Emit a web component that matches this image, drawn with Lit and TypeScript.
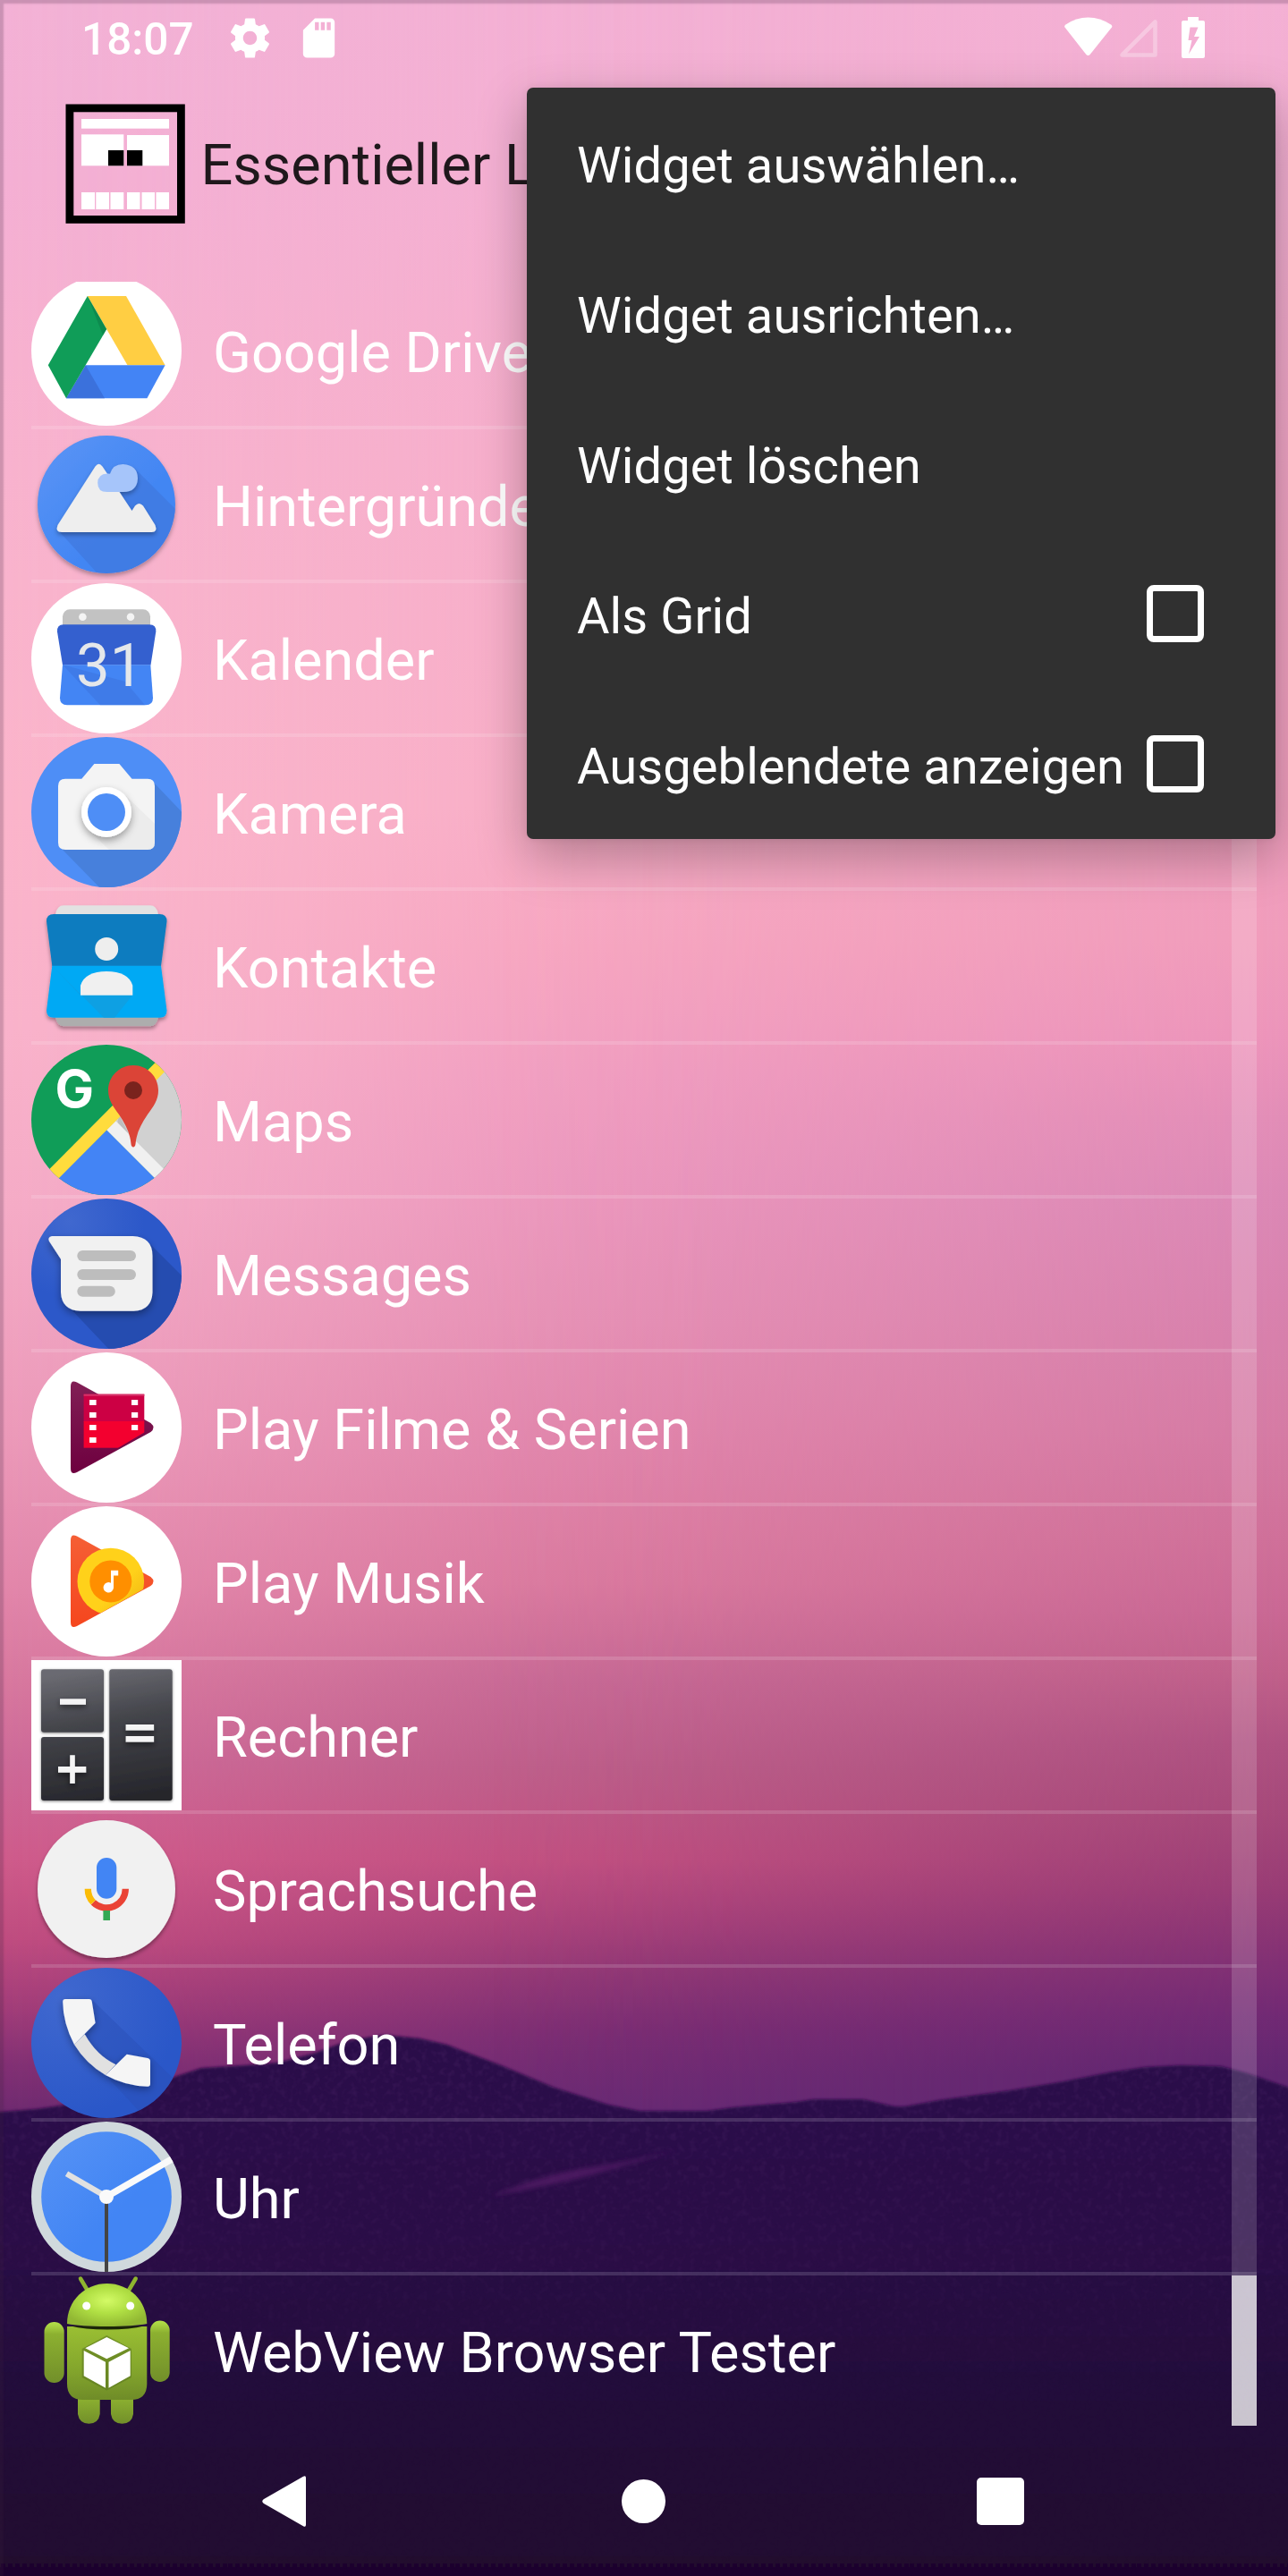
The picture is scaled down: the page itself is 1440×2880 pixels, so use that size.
import { LitElement, html, svg, css } from "lit";
import { customElement } from "lit/decorators.js";

/* ---------- app icons, each drawn on a 168 x 168 grid ---------- */

const driveIcon = svg`
  <circle cx="84" cy="84" r="84" fill="#fff"/>
  <path fill="#ffce43" d="M62.8 23H106l43.6 77.3h-42.1z"/>
  <path fill="#4384f5" d="M60.8 100.3h88.8l-20.2 37H39z"/>
  <path fill="#3b71dc" d="M60.8 100.3 82 137.3H39z"/>
  <path fill="#109d58" d="M18.8 100.3 62.8 23l21.4 37L39 137.3z"/>
  <path fill="#0a6b3c" opacity=".35" d="M62.8 23l21.4 37-4 7z"/>`;

const wallpaperIcon = svg`
  <defs>
    <linearGradient id="wp" x1="0" y1="0" x2="1" y2="1"><stop offset="0" stop-color="#5b95f5"/><stop offset=".6" stop-color="#4386f3"/></linearGradient>
    <clipPath id="wpc"><circle cx="84" cy="84" r="77"/></clipPath>
    <filter id="soft" x="-20%" y="-20%" width="140%" height="140%"><feDropShadow dx="0" dy="3" stdDeviation="2.5" flood-opacity=".3"/></filter>
  </defs>
  <circle cx="84" cy="84" r="77" fill="url(#wp)" filter="url(#soft)"/>
  <g clip-path="url(#wpc)">
    <path fill="#3e72d6" opacity=".5" d="M114 42l60 60v70H84L32 115z"/>
  </g>
  <g filter="url(#soft)">
    <path fill="#eee" d="M71.500 41.500q4-5.500 8 0L112.500 91l3.500-5.500q4.500-5 9 0L138.500 107q3 8-4 8H34q-7.500 0-4.500-8z"/>
    <path fill="#a6c5fa" d="M84.500 70q-10.300 0-10.300-10T85 49.500l3 .3Q91 39 102.500 39 119 40 119 55q-1 15-16 15z"/>
  </g>`;

const calendarIcon = svg`
  <circle cx="84" cy="84" r="84" fill="#fff"/>
  <rect x="35" y="29.300" width="98" height="30" rx="8" fill="#c2c2c2"/>
  <circle cx="57.400" cy="37.700" r="4.300" fill="#f4f4f4"/>
  <circle cx="111" cy="37.700" r="4.300" fill="#f4f4f4"/>
  <path fill="#3460cf" d="M36 46.300h96q8 0 7.300 8L133.500 91.500h-98.500L29 54.300q-.500-8 7-8z"/>
  <path fill="#4385f4" d="M35 91.300h98.300l2.700 37q0 8-8 8H40q-8 0-8-8z"/>
  <path fill="#3b71dc" opacity=".5" d="M35 91.300 77 136.300h50L105 110z"/>
  <text x="50" y="115" font-family="Roboto, sans-serif" font-size="67" fill="#e4e7ea">31</text>`;

const cameraIcon = svg`
  <defs>
    <clipPath id="cmc"><circle cx="84" cy="84" r="84"/></clipPath>
    <filter id="cms" x="-30%" y="-30%" width="160%" height="160%"><feDropShadow dx="0" dy="4" stdDeviation="4" flood-opacity=".35"/></filter>
  </defs>
  <circle cx="84" cy="84" r="84" fill="#4e8ef6"/>
  <path clip-path="url(#cmc)" fill="#4780dc" d="M136 50l40 42v80H80L33 124z"/>
  <path fill="#f4f4f4" d="M38 46.700h18.300L70.400 30h28l14.100 16.700H130q8 0 8 8V118q0 8-8 8H38q-8 0-8-8V54.700q0-8 8-8z"/>
  <path fill="#e6e6e6" d="M104 64l34 33v21q0 8-8 8H87L64 104z" opacity=".6"/>
  <circle cx="84" cy="84" r="28" fill="#fff" filter="url(#cms)"/>
  <circle cx="84" cy="84" r="21" fill="#4e8ef6"/>`;

const contactsIcon = svg`
  <defs><filter id="cts" x="-20%" y="-20%" width="140%" height="140%"><feDropShadow dx="0" dy="3" stdDeviation="2" flood-opacity=".35"/></filter></defs>
  <g filter="url(#cts)">
    <path fill="#e2e2e2" d="M36 16.300h97q7 0 9 9.700H27q2-9.700 9-9.700z"/>
    <path fill="#adadad" d="M27 141h115q-2 10.300-9 10.300H36q-7 0-9-10.300z"/>
    <path fill="#0a7cbf" d="M25 26h118.500q8 0 8 8L145 84H23.300L17 34q0-8 8-8z"/>
    <path fill="#06a9f4" d="M23.300 83.700H145l6.500 50q0 8-8 8H25q-8 0-8-8z"/>
  </g>
  <path fill="#129ddf" d="M23.300 83.700 55 116.700h58L93 141.700H81z" opacity=".8"/>
  <ellipse cx="84.200" cy="65" rx="13" ry="13" fill="#eee"/>
  <path fill="#f0f0f0" d="M55 116.700v-11q5-15.700 29.200-15.700t29.100 15.700v11z"/>`;

const mapsIcon = svg`
  <defs><clipPath id="mpc"><circle cx="84" cy="84" r="84"/></clipPath></defs>
  <g clip-path="url(#mpc)">
    <rect width="168" height="168" fill="#109d58"/>
    <path fill="#d1d1d1" d="M168 10 84 95l84 84z"/>
    <path fill="#bdbdbd" d="M98 78l18 36-20-24z"/>
    <path fill="#4384f5" d="M84.200 95.300 0 179h168z"/>
    <path fill="#f0f0f0" d="M84.200 95.300 94.500 85.300 168 159l-10 10z"/>
    <path fill="#ffdc3d" d="M0 159.400 159.500-1 170 9.300 10.500 169.700z"/>
  </g>
  <text x="26.500" y="69.500" font-family="Inter, Roboto, sans-serif" font-weight="700" font-size="58" fill="#fff">G</text>
  <path fill="#db4437" d="M114 23c15.500 0 28 12.500 28 28 0 11-5.500 18-12 27-7.500 11-12.500 21-13.500 33-.300 4.500-4.700 4.500-5 0-1-12-6-22-13.500-33C91.500 69 86 62 86 51c0-15.500 12.500-28 28-28z"/>
  <circle cx="114" cy="51" r="10" fill="#7a231d"/>`;

const messagesIcon = svg`
  <defs>
    <clipPath id="msc"><circle cx="84" cy="84" r="84"/></clipPath>
    <radialGradient id="msg" cx=".25" cy=".15" r=".5"><stop offset="0" stop-color="#4068cf"/><stop offset="1" stop-color="#2c58c9"/></radialGradient>
    <filter id="mss" x="-20%" y="-20%" width="140%" height="140%"><feDropShadow dx="0" dy="4" stdDeviation="4" flood-opacity=".35"/></filter>
  </defs>
  <circle cx="84" cy="84" r="84" fill="url(#msg)"/>
  <path clip-path="url(#msc)" fill="#254cb0" d="M133 51l45 45v80H94L40 119z"/>
  <path filter="url(#mss)" fill="#f1f1f1" d="M23 42h90.500q22 1 22 22v41q-1 20-21 20.700H55q-21-.700-22-21V67.700L19.800 47.500Q18 43 23 42z"/>
  <rect x="51.300" y="58" width="65.700" height="12" rx="6" fill="#bdbdbd"/>
  <rect x="51.300" y="79" width="65.700" height="12" rx="6" fill="#bdbdbd"/>
  <rect x="51.300" y="97.700" width="42.500" height="12" rx="6" fill="#bdbdbd"/>`;

const playShape = "M44 38q0-8 7-4.500l82.500 45.500q6 5 0 10L51 134q-7 3.500-7-4.500z";

const filmIcon = svg`
  <defs>
    <linearGradient id="flg" x1="0" y1="0" x2="0" y2="1"><stop offset="0" stop-color="#811f55"/><stop offset="1" stop-color="#6e003f"/></linearGradient>
    <clipPath id="flc"><path d="M0 0h168v65L44 138z"/></clipPath>
  </defs>
  <circle cx="84" cy="84" r="84" fill="#fff"/>
  <path fill="url(#flg)" d=${playShape}/>
  <g clip-path="url(#flc)">
    <rect x="58.600" y="46.700" width="67.700" height="31" fill="#cc0044"/>
    <rect x="58.600" y="46.700" width="67.700" height="2" fill="#d8326a"/>
    <rect x="58.600" y="77" width="67.700" height="29.700" fill="#f3002f"/>
  </g>
  <g fill="#fff">
    <rect x="65" y="53" width="7.600" height="6"/><rect x="65" y="67" width="7.600" height="6"/>
    <rect x="65" y="81" width="7.600" height="6"/><rect x="65" y="95" width="7.600" height="6"/>
    <rect x="112" y="53" width="7.200" height="6"/><rect x="112" y="67" width="7.200" height="6"/>
    <rect x="112" y="81" width="7.200" height="6"/>
  </g>`;

const musicIcon = svg`
  <defs>
    <linearGradient id="mug" x1="0" y1="0" x2="0" y2="1"><stop offset="0" stop-color="#f55f35"/><stop offset="1" stop-color="#f5461e"/></linearGradient>
    <linearGradient id="muy" x1="0" y1="0" x2="1" y2="1"><stop offset=".6" stop-color="#ffd11a"/><stop offset="1" stop-color="#eeb211"/></linearGradient>
    <clipPath id="muc"><path d="M0 0h168v69L44 138z"/></clipPath>
  </defs>
  <circle cx="84" cy="84" r="84" fill="#fff"/>
  <path fill="url(#mug)" d=${playShape}/>
  <circle clip-path="url(#muc)" cx="88.800" cy="84" r="37.300" fill="url(#muy)"/>
  <circle cx="88.800" cy="84" r="23.500" fill="#ff8f00"/>
  <path fill="#fff" d="M89 71.700h8.200v5.800H92V91a5.700 5.700 0 1 1-3-5.200z"/>`;

const calculatorIcon = svg`
  <defs>
    <linearGradient id="ck" gradientUnits="userSpaceOnUse" x1="60" y1="10" x2="84" y2="157"><stop offset="0" stop-color="#6b6b72"/><stop offset=".4" stop-color="#44454b"/><stop offset="1" stop-color="#27272c"/></linearGradient>
    <filter id="cks" x="-10%" y="-10%" width="120%" height="120%"><feDropShadow dx="0" dy="1" stdDeviation="1.500" flood-opacity=".5"/></filter>
    <filter id="ckg" x="-50%" y="-50%" width="200%" height="200%"><feDropShadow dx="0" dy="3" stdDeviation="3" flood-opacity=".5"/></filter>
  </defs>
  <rect width="168" height="168" fill="#fff"/>
  <g fill="url(#ck)" filter="url(#cks)">
    <rect x="11" y="10.300" width="70" height="70.400" rx="3"/>
    <rect x="11" y="86" width="70" height="71" rx="3"/>
    <rect x="87.300" y="10.300" width="70.400" height="146.700" rx="3"/>
  </g>
  <g fill="#f4f4f4" filter="url(#ckg)">
    <rect x="32" y="43.300" width="29" height="6.500"/>
    <path d="M30 119h13.200v-12.700h5.600V119H61.300v6.700H48.800V138h-5.600v-12.300H30z"/>
    <rect x="105.600" y="72" width="31.500" height="6.600"/>
    <rect x="105.600" y="85" width="31.500" height="6.600"/>
  </g>`;

const voiceIcon = svg`
  <defs><filter id="vos" x="-20%" y="-20%" width="140%" height="140%"><feDropShadow dx="0" dy="3" stdDeviation="2" flood-opacity=".35"/></filter></defs>
  <circle cx="84" cy="84" r="77" fill="#f1f1f1" filter="url(#vos)"/>
  <rect x="73" y="49" width="22.300" height="45.700" rx="11.100" fill="#4285f4"/>
  <g fill="none" stroke-width="7.300">
    <path stroke="#ea4335" d="M105.300 83.700a21.100 21.100 0 0 1-36 15.100"/>
    <path stroke="#fbbc05" d="M63.300 83.700a21.100 21.100 0 0 0 6 15.100"/>
  </g>
  <rect x="80.400" y="108" width="7.600" height="11" fill="#34a853"/>`;

const phoneIcon = svg`
  <defs>
    <clipPath id="phc"><circle cx="84" cy="84" r="84"/></clipPath>
    <radialGradient id="phg" cx=".2" cy=".2" r=".8"><stop offset="0" stop-color="#4068cf"/><stop offset="1" stop-color="#2a57c8"/></radialGradient>
    <filter id="phs" x="-20%" y="-20%" width="140%" height="140%"><feDropShadow dx="0" dy="3" stdDeviation="4" flood-opacity=".35"/></filter>
  </defs>
  <circle cx="84" cy="84" r="84" fill="url(#phg)"/>
  <path clip-path="url(#phc)" fill="#2a50b8" opacity=".5" d="M68 36 160 125 125 165 84 121 60 74z"/>
  <g filter="url(#phs)">
    <path fill="#e1e1e1" d="M59.700 74.300Q73 98 94.500 108.300L83 120Q61 107 48 85.700z"/>
    <path fill="#f5f5f5" d="M38 35h26.500q3 0 3.300 3l3.800 23.700L48 85.700Q35.500 62 35.200 38q0-3 2.800-3z"/>
    <path fill="#f5f5f5" d="M106.800 96.700 130 101q3 .500 3 3.500v25q0 3.200-3 3.200-25-.500-47-12.700z"/>
  </g>`;

const clockIcon = svg`
  <defs>
    <linearGradient id="clg" x1="0" y1="0" x2="1" y2="1"><stop offset="0" stop-color="#5793f5"/><stop offset=".6" stop-color="#4285f4"/></linearGradient>
    <clipPath id="clc"><circle cx="84" cy="84" r="84"/></clipPath>
  </defs>
  <circle cx="84" cy="84" r="84" fill="#d0d9dd"/>
  <circle cx="84" cy="84" r="72.800" fill="url(#clg)"/>
  <g clip-path="url(#clc)">
    <path d="M84 84 39.500 58.300" stroke="#e1e1e1" stroke-width="6.500"/>
    <path d="M84 84 163 38.500" stroke="#fafafa" stroke-width="7.500"/>
    <path d="M84 84V168" stroke="#444" stroke-width="4"/>
  </g>
  <circle cx="84" cy="84" r="8" fill="#fafafa"/>`;

const androidIcon = svg`
  <defs>
    <linearGradient id="anb" x1="0" y1="0" x2="0" y2="1"><stop offset="0" stop-color="#9abf33"/><stop offset=".6" stop-color="#83a52c"/><stop offset="1" stop-color="#6f8c28"/></linearGradient>
    <radialGradient id="anh" cx=".5" cy=".4" r=".6"><stop offset="0" stop-color="#d3fb66"/><stop offset=".5" stop-color="#b0df43"/><stop offset="1" stop-color="#92b833"/></radialGradient>
    <linearGradient id="ana" x1="0" y1="0" x2="0" y2="1"><stop offset="0" stop-color="#b5e24a"/><stop offset=".2" stop-color="#8cb030"/><stop offset="1" stop-color="#728f2a"/></linearGradient>
  </defs>
  <path d="M55 3.500 63 17M116.700 3.500 108.700 17" stroke="#8fb52f" stroke-width="4.500" stroke-linecap="round"/>
  <path fill="url(#ana)" d="M52 130h24.700v25q-1.700 10.700-12.300 10.700T52 155zM89 130h25v25q-1.700 10.700-12.500 10.700T89 155z"/>
  <rect x="14.500" y="52" width="22.200" height="68" rx="11" fill="url(#ana)"/>
  <rect x="133" y="50.500" width="21.700" height="68.500" rx="10.800" fill="url(#ana)"/>
  <path fill="url(#anb)" d="M40 57h89.300v64q0 18-18 18H58q-18 0-18-18z"/>
  <path fill="#1c2608" d="M44 56.500h82q-15 4-41 4t-41-4z"/>
  <path fill="url(#anh)" d="M40 54C40 28 60 9 84.700 9s44.600 19 44.600 45q-15 3-44.600 3T40 54z"/>
  <circle cx="61.700" cy="34" r="4.500" fill="#fff"/>
  <circle cx="110.700" cy="34" r="4.500" fill="#fff"/>
  <path fill="#5c7820" d="M84.300 67 112 82v32l-27.700 14.500L56.700 114V82z" opacity=".6"/>
  <path fill="#fff" d="M84.300 69 109 81.300 84.300 93.300 60.300 81.300zM58.700 84 83 96.700v29L58.700 112.300zM110.700 84 86.500 96.700v29l24.200-13.400z"/>`;

const apps = [
  { name: "Google Drive", icon: driveIcon },
  { name: "Hintergründe", icon: wallpaperIcon },
  { name: "Kalender", icon: calendarIcon },
  { name: "Kamera", icon: cameraIcon },
  { name: "Kontakte", icon: contactsIcon },
  { name: "Maps", icon: mapsIcon },
  { name: "Messages", icon: messagesIcon },
  { name: "Play Filme & Serien", icon: filmIcon },
  { name: "Play Musik", icon: musicIcon },
  { name: "Rechner", icon: calculatorIcon },
  { name: "Sprachsuche", icon: voiceIcon },
  { name: "Telefon", icon: phoneIcon },
  { name: "Uhr", icon: clockIcon },
  { name: "WebView Browser Tester", icon: androidIcon },
];

const menuItems = [
  { label: "Widget auswählen…", checkable: false },
  { label: "Widget ausrichten…", checkable: false },
  { label: "Widget löschen", checkable: false },
  { label: "Als Grid", checkable: true },
  { label: "Ausgeblendete anzeigen", checkable: true },
];

const hillOutline =
  "M-10 2362 40 2358 75 2353 140 2345 195 2322 225 2312 275 2309 310 2306 350 2296 390 2281 430 2275 470 2279 500 2286 560 2309 620 2334 680 2353 715 2360H790L820 2356 890 2350 910 2347H965L1000 2355H1012L1050 2348 1130 2337 1190 2327 1240 2317 1280 2311 1320 2309 1365 2310 1395 2318 1450 2337V2890H-10z";

/* ---------- wallpaper: dusk sky above dark hills ---------- */

@customElement("dusk-wallpaper")
class DuskWallpaper extends LitElement {
  static styles = css`
    :host { display: block; position: absolute; inset: 0; overflow: hidden; }
    .sky, .hills { position: absolute; inset: 0; }
    .hills { display: block; width: 1440px; height: 2880px; }
    .left {
      background: linear-gradient(#f3b2d6 0, #f4b0d4 200px, #f7b2d0 400px, #f9b4cd 650px, #fbb5cb 900px, #f9b3cb 1150px,
        #f5acc7 1350px, #ec9aba 1600px, #e286aa 1780px, #d8789f 1880px, #ce6a98 1970px, #cf5b8b 2080px, #bf4c80 2170px, #a03c79 2250px,
        #823074 2310px, #6c2a70 2370px);
    }
    .middle {
      background: linear-gradient(#f3b0d4 0, #f4b0d2 200px, #f6aecb 500px, #f8aec7 900px, #f6a5c0 1060px, #f09dc0 1200px,
        #eb97bd 1320px, #e58fb4 1480px, #e084aa 1620px, #d9799e 1770px, #c56894 1880px, #bb5d88 1980px, #bf4f80 2080px, #a8427a 2150px, #8e3775 2210px,
        #7a2d73 2270px, #682a74 2360px);
      mask-image: linear-gradient(90deg, transparent, rgba(0,0,0,.12) 12%, rgba(0,0,0,.42) 25%, rgba(0,0,0,.78) 38%, rgba(0,0,0,.95) 48%, #000 58%);
    }
    .right {
      background: linear-gradient(#f4b0d4 0, #f1add0 200px, #f0a2c2 600px, #f09cbb 1050px, #ec94ba 1160px, #e28db7 1250px,
        #db88b5 1340px, #d882ae 1450px, #d57ba4 1600px, #cf7099 1720px, #c96894 1800px, #c0608a 1870px, #ae5181 1950px, #a54879 2030px, #983c75 2110px,
        #853274 2180px, #722a74 2250px, #602670 2320px);
      mask-image: linear-gradient(90deg, transparent 38%, rgba(0,0,0,.06) 48%, rgba(0,0,0,.28) 62%, rgba(0,0,0,.65) 80%, #000);
    }
    .edge { position: absolute; inset: 0; box-shadow: inset 4px 4px 2px rgba(60, 30, 60, .22); }
  `;
  render() {
    return html`
      <div class="sky left"></div>
      <div class="sky middle"></div>
      <div class="sky right"></div>
      <svg class="hills" viewBox="0 0 1440 2880">
        <defs>
          <linearGradient id="hill" gradientUnits="userSpaceOnUse" x1="0" y1="2280" x2="0" y2="2880">
            <stop offset="0" stop-color="#2b0c4a"/><stop offset=".4" stop-color="#290b45"/>
            <stop offset=".65" stop-color="#230a3a"/><stop offset="1" stop-color="#1f062e"/>
          </linearGradient>
          <filter id="blur1"><feGaussianBlur stdDeviation="1.500"/></filter>
          <filter id="blur3" x="-10%" y="-50%" width="120%" height="200%"><feGaussianBlur stdDeviation="2.500"/></filter>
          <filter id="grain" x="0" y="0" width="100%" height="100%">
            <feTurbulence type="fractalNoise" baseFrequency=".14" numOctaves="2" seed="4"/>
            <feColorMatrix values="0 0 0 0 .32  0 0 0 0 .1  0 0 0 0 .4  1.600 0 0 0 -.7"/>
          </filter>
          <linearGradient id="fade" x1="0" y1="0" x2="0" y2="1">
            <stop offset="0" stop-color="#fff"/><stop offset=".35" stop-color="#999"/><stop offset=".7" stop-color="#111"/>
          </linearGradient>
          <mask id="hillMask"><path d=${hillOutline} fill="url(#fade)"/></mask>
        </defs>
        <path fill="url(#hill)" filter="url(#blur1)" d=${hillOutline}/>
        <g mask="url(#hillMask)"><rect y="2270" width="1440" height="610" filter="url(#grain)" opacity=".17"/></g>
        <path fill="#541f68" opacity=".75" filter="url(#blur3)" d="M550 2455Q610 2430 660 2423T760 2403Q700 2421 660 2432T550 2455z"/>
      </svg>
      <div class="edge"></div>`;
  }
}

@customElement("app-root")
class AppRoot extends LitElement {
  static styles = css`
    :host { display: block; }
    .screen {
      position: relative; display: flex; flex-direction: column;
      width: 1440px; height: 2880px; overflow: hidden;
      font-family: Roboto, sans-serif; color: #fff;
    }
    .status, .header, .content, .nav { position: relative; }
    svg { display: block; flex: none; }

    .status {
      box-sizing: border-box; height: 84px; flex: none;
      display: flex; align-items: center; padding: 0 84px 0 91px;
    }
    .time { font-size: 49.500px; font-weight: 500; line-height: 84px; padding-top: 4px; width: 162px; }
    .gear { margin-right: 24px; }
    .system { margin-left: auto; display: flex; align-items: center; }

    .header { box-sizing: border-box; height: 231px; flex: none; display: flex; align-items: flex-start; padding: 32px 0 0 73px; }
    .title { color: #1f181c; font-size: 63px; line-height: 134px; margin-left: 17.500px; padding-top: 2px; white-space: nowrap; }

    .content { flex: none; height: 2397px; padding: 0 35px; overflow: hidden; display: flex; }
    .list { flex: 1; margin-top: -7px; }
    .row { height: 168px; display: flex; align-items: center; border-bottom: 4px solid rgba(255, 255, 255, .14); }
    .row:last-child { border-bottom: 0; }
    .label { margin-left: 35px; padding-top: 4px; font-size: 63px; line-height: 75px; white-space: nowrap; }
    .scrollbar {
      width: 28px; margin-left: -28px; height: 2397px; display: flex; flex-direction: column;
    }
    .track { flex: 1; background: rgba(255, 255, 255, .16); }
    .thumb { height: 168px; background: rgba(255, 255, 255, .76); }

    .nav { height: 168px; flex: none; display: flex; align-items: center; justify-content: space-between; padding: 0 295px 0 293px; }
    .home { margin-left: 4px; }

    .menu {
      position: absolute; left: 589px; top: 98px; width: 837px; height: 840px;
      background: #303030; border-radius: 7px;
      box-shadow: 0 20px 56px rgba(0, 0, 0, .28), 0 0 8px rgba(0, 0, 0, .08);
    }
    .item {
      height: 168px; box-sizing: border-box; padding: 0 80px 0 56px;
      display: flex; align-items: center; justify-content: space-between;
      font-size: 56px; letter-spacing: .09px; white-space: nowrap;
    }
    .text { padding-top: 6px; }
    .box { box-sizing: border-box; width: 64px; height: 64px; border: 7px solid #fff; border-radius: 8px; }
  `;

  render() {
    return html`
      <div class="screen">
        <dusk-wallpaper></dusk-wallpaper>

        <div class="status">
          <div class="time">18:07</div>
          <svg class="gear" width="53" height="53" viewBox="0 0 24 24" fill="#fff"><path d="M19.430 12.980c.040-.320.070-.640.070-.980s-.030-.660-.070-.980l2.110-1.650c.190-.150.240-.420.120-.640l-2-3.460c-.120-.220-.390-.300-.610-.220l-2.490 1c-.520-.400-1.080-.730-1.690-.980l-.380-2.650C14.460 2.180 14.250 2 14 2h-4c-.250 0-.460.180-.490.420l-.380 2.650c-.610.250-1.170.590-1.690.980l-2.490-1c-.230-.090-.490 0-.610.220l-2 3.460c-.130.220-.070.490.120.640l2.110 1.650c-.040.320-.070.650-.070.980s.030.660.070.980l-2.110 1.650c-.190.150-.240.420-.120.640l2 3.460c.120.220.390.300.610.220l2.490-1c.520.400 1.080.730 1.690.980l.380 2.650c.030.240.240.420.490.420h4c.250 0 .460-.180.490-.420l.380-2.650c.610-.250 1.170-.590 1.690-.980l2.490 1c.230.090.490 0 .610-.220l2-3.460c.120-.220.070-.490-.120-.640zM12 15.500c-1.930 0-3.500-1.570-3.500-3.500s1.570-3.500 3.500-3.500 3.500 1.570 3.500 3.500-1.570 3.500-3.500 3.500z"/></svg>
          <svg width="53" height="53" viewBox="0 0 24 24" fill="#fff"><path d="M18 2h-8L4.020 8 4 20c0 1.100.900 2 2 2h12c1.100 0 2-.900 2-2V4c0-1.100-.900-2-2-2zm-6 6h-2V4h2v4zm3 0h-2V4h2v4zm3 0h-2V4h2v4z"/></svg>
          <svg class="system" width="166" height="84" viewBox="1190 0 166 84" fill="#fff">
            <path d="M1190.500 30.500q-1-1.500 1-3Q1203 19.500 1216.500 19.500T1242 27.500q2 1.500 1 3L1219 60.500q-2.500 3-5 0z"/>
            <path d="M1254.500 61.500 1291.500 24.500V61.500z" fill="none" stroke="#fff" stroke-opacity=".3" stroke-width="4.600" stroke-linejoin="round"/>
            <path fill-rule="evenodd" d="M1328 19h12v4h5q2 0 2 2v38q0 2-2 2h-22q-2 0-2-2V25q0-2 2-2h5zM1330.500 30.500 1328.500 45h4l-3.500 15.500 12-19.500h-6l4.500-10.500z"/>
          </svg>
        </div>

        <div class="header">
          <svg width="134" height="134" viewBox="0 0 134 134">
            <rect x="4.900" y="4.900" width="124.500" height="124.500" fill="none" stroke="#000" stroke-width="8.800"/>
            <g fill="#fff">
              <rect x="18" y="17" width="98" height="10.700"/>
              <rect x="18" y="34.300" width="47.300" height="35"/>
              <rect x="69" y="35" width="47" height="34.300"/>
              <rect x="18" y="99" width="15" height="19"/><rect x="34.300" y="99" width="14.700" height="19"/><rect x="50.500" y="99" width="14.800" height="19"/>
              <rect x="69" y="99" width="14.500" height="19"/><rect x="85.500" y="99" width="14.500" height="19"/><rect x="101.500" y="99" width="14.500" height="19"/>
            </g>
            <rect x="48" y="52" width="17.300" height="17.300"/><rect x="69" y="52" width="17.300" height="17.300"/>
          </svg>
          <div class="title">Essentieller L</div>
        </div>

        <div class="content">
          <div class="list">
            ${apps.map(
              (app) => html`
                <div class="row">
                  <svg width="168" height="168" viewBox="0 0 168 168">${app.icon}</svg>
                  <div class="label">${app.name}</div>
                </div>`
            )}
          </div>
          <div class="scrollbar"><div class="track"></div><div class="thumb"></div></div>
        </div>

        <div class="nav">
          <svg width="49" height="57" viewBox="0 0 49 57" fill="#fff"><path d="M46 .800q3-1.800 3 1.500V54.700q0 3.300-3 1.500L2 31q-3.500-2.500 0-5z"/></svg>
          <svg class="home" width="49" height="49" viewBox="0 0 49 49" fill="#fff"><circle cx="24.500" cy="24.500" r="24.500"/></svg>
          <svg width="53" height="53" viewBox="0 0 53 53" fill="#fff"><rect width="53" height="53" rx="5"/></svg>
        </div>

        <div class="menu">
          ${menuItems.map(
            (item) => html`
              <div class="item">
                <span class="text">${item.label}</span>
                ${item.checkable ? html`<span class="box"></span>` : ""}
              </div>`
          )}
        </div>
      </div>`;
  }
}
